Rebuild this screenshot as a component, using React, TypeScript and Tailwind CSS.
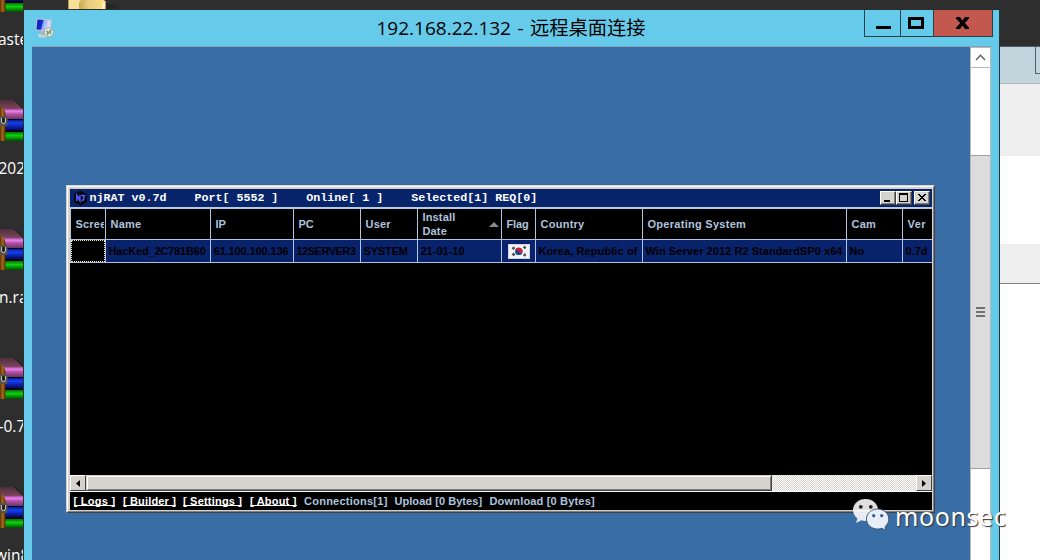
import React from "react";

const archives = [
  { name: "aste", shift: "-ml-[2px]" },
  { name: "202", shift: "-ml-[1.500px]" },
  { name: "n.ra", shift: "-ml-[1px]" },
  { name: "-0.7", shift: "-ml-[1.500px]" },
  { name: "win8", shift: "-ml-[5px]" },
];

const columns = [
  { head: "Scree", cell: "", w: "w-[35px]", ht: "tracking-[0.2px]", ct: "" },
  { head: "Name", cell: "HacKed_2C781B60", w: "w-[105px]", ht: "tracking-[0.2px]", ct: "tracking-[-0.17px]" },
  { head: "IP", cell: "61.100.100.136", w: "w-[83px]", ht: "", ct: "tracking-[-0.1px]" },
  { head: "PC", cell: "12SERVER3", w: "w-[67px]", ht: "", ct: "tracking-[-0.5px]" },
  { head: "User", cell: "SYSTEM", w: "w-[57px]", ht: "tracking-[0.2px]", ct: "tracking-[-0.15px]" },
  { head: "Install Date", cell: "21-01-10", w: "w-[84px]", ht: "tracking-[0.15px]", ct: "" },
  { head: "Flag", cell: "flag", w: "w-[34px]", ht: "tracking-[-0.1px]", ct: "" },
  { head: "Country", cell: "Korea, Republic of", w: "w-[107px]", ht: "tracking-[0.26px]", ct: "tracking-[0.1px]" },
  { head: "Operating System", cell: "Win Server 2012 R2 StandardSP0 x64", w: "w-[204px]", ht: "tracking-[0.28px]", ct: "tracking-[0.06px]" },
  { head: "Cam", cell: "No", w: "w-[56px]", ht: "tracking-[0.2px]", ct: "" },
  { head: "Ver", cell: "0.7d", w: "w-[30px]", ht: "tracking-[0.5px]", ct: "" },
];

const links = [
  { text: "[ Logs ]", w: "w-[49.5px]", t: "tracking-[0.28px]" },
  { text: "[ Builder ]", w: "w-[60px]", t: "tracking-[0.15px]" },
  { text: "[ Settings ]", w: "w-[67px]", t: "tracking-[0.2px]" },
  { text: "[ About ]", w: "w-[54px]", t: "tracking-[0.2px]" },
];

const stats = [
  { text: "Connections[1]", w: "w-[90.5px]", t: "tracking-[0.25px]" },
  { text: "Upload [0 Bytes]", w: "w-[95px]", t: "tracking-[0.05px]" },
  { text: "Download [0 Bytes]", w: "w-[110px]", t: "tracking-[0.18px]" },
];

function ArchiveIcon() {
  return (
    <svg width="24" height="42" viewBox="0 0 24 42" className="block shrink-0">
      <defs>
        <linearGradient id="lid" x1="0" y1="0" x2="0" y2="1">
          <stop offset="0" stopColor="#4c3038" />
          <stop offset="1" stopColor="#7d4560" />
        </linearGradient>
        <linearGradient id="pink" x1="0" y1="0" x2="0" y2="1">
          <stop offset="0" stopColor="#a04a98" />
          <stop offset="0.22" stopColor="#f080ee" />
          <stop offset="0.5" stopColor="#b052a6" />
          <stop offset="1" stopColor="#6c3460" />
        </linearGradient>
        <linearGradient id="blue" x1="0" y1="0" x2="0" y2="1">
          <stop offset="0" stopColor="#0a1c90" />
          <stop offset="0.3" stopColor="#1440f4" />
          <stop offset="1" stopColor="#06085c" />
        </linearGradient>
        <linearGradient id="green" x1="0" y1="0" x2="0" y2="1">
          <stop offset="0" stopColor="#067006" />
          <stop offset="0.4" stopColor="#0cd40c" />
          <stop offset="1" stopColor="#034803" />
        </linearGradient>
        <linearGradient id="strap" x1="0" y1="0" x2="1" y2="0">
          <stop offset="0" stopColor="#5a3405" />
          <stop offset="0.5" stopColor="#a8691a" />
          <stop offset="1" stopColor="#4a2a04" />
        </linearGradient>
      </defs>
      <path d="M0 0H14L23 9H0Z" fill="url(#lid)" />
      <path d="M14.500 0L23 8.500" stroke="#151515" strokeWidth="1" />
      <rect y="9" width="23" height="10" fill="url(#pink)" />
      <rect y="19" width="23" height="13" fill="#04041c" />
      <rect y="20" width="23" height="10" fill="url(#blue)" />
      <rect y="32" width="23" height="9" fill="url(#green)" />
      <path d="M0 7Q5 8 5.500 14V41H0Z" fill="url(#strap)" />
      <rect x="-1" y="16" width="8.500" height="10" rx="1.500" fill="#55524c" />
      <path d="M1.500 18V22Q3.500 25.500 5.500 22V18" fill="#221e1a" stroke="#b8b8b4" strokeWidth="1.100" />
    </svg>
  );
}

function FolderIcon() {
  return (
    <svg width="50" height="10" viewBox="0 0 50 10" className="block">
      <defs>
        <linearGradient id="fold" x1="0" y1="0" x2="1" y2="0">
          <stop offset="0" stopColor="#c9a950" />
          <stop offset="0.4" stopColor="#e8cd80" />
          <stop offset="1" stopColor="#f8dc80" />
        </linearGradient>
      </defs>
      <path d="M38 3L50 6L46 9H38Z" fill="#242424" />
      <path d="M0 0H36L38 2V9H0Z" fill="#f6e09a" />
      <path d="M13 0H35V9H11V3Z" fill="url(#fold)" />
      <path d="M35.500 3V9" stroke="#fff8e0" strokeWidth="2" />
      <path d="M0.500 0V9M37.500 1V9" stroke="#b89a50" strokeWidth="1" />
    </svg>
  );
}

function RemoteIcon() {
  return (
    <svg width="20" height="22" viewBox="0 0 20 22" className="block">
      <defs>
        <linearGradient id="screen" x1="0" y1="0" x2="1" y2="0.2">
          <stop offset="0" stopColor="#0818a8" />
          <stop offset="0.46" stopColor="#1430d8" />
          <stop offset="0.52" stopColor="#8ca4f4" />
          <stop offset="1" stopColor="#dce4ff" />
        </linearGradient>
      </defs>
      <ellipse cx="8" cy="17.500" rx="5" ry="2" fill="#cdd4d8" />
      <path d="M6 13H11V17H6Z" fill="#a8b4bc" />
      <path d="M1.500 0.500L17 1.500L15.800 14.500L0.300 12.500Z" fill="#b8c4cc" />
      <path d="M2.500 1.500L15.500 2.500L14.800 12.500L1.500 11.500Z" fill="url(#screen)" />
      <circle cx="13.800" cy="14.300" r="4.700" fill="#dfe3df" stroke="#9da5a5" strokeWidth="0.900" />
      <path d="M11.500 13L13.500 15L11.800 17M16.300 11.700L14.500 13.800L16.300 15.600" fill="none" stroke="#5c9a58" strokeWidth="1.300" />
    </svg>
  );
}

function KoreaFlag() {
  return (
    <svg width="22" height="15" viewBox="0 0 22 15" className="block">
      <rect x="0.500" y="0.500" width="21" height="14" fill="#f4f4f6" stroke="#d4d4dc" />
      <circle cx="10.800" cy="7.400" r="3.700" fill="#144a9c" />
      <path d="M7.300 6.200A3.700 3.700 0 0 1 14.300 8.600C13.400 9.400 11.700 9.200 10.800 7.700C9.900 6.200 8.300 5.600 7.300 6.200Z" fill="#d62030" />
      <path d="M4 4.800L6 2.700M5 5.700L7 3.600M15.200 2.900L17.200 4.900M16.300 2.200L18 4M4 9.800L6 11.900M5 9L7 11M15.300 11.600L17.300 9.500M16.400 12.300L18 10.600" stroke="#444" strokeWidth="1.200" />
    </svg>
  );
}

function CaptionButton({ children, className = "" }: { children: React.ReactNode; className?: string }) {
  return (
    <div className={"h-[14px] w-4 border border-t-white border-l-white border-r-[#404040] border-b-[#404040] bg-[#d6d3ce] " + className}>
      <svg width="14" height="12" viewBox="0 0 14 12" className="block" shapeRendering="crispEdges">
        <path d="M13.500 0V11.500H0" fill="none" stroke="#808080" />
        {children}
      </svg>
    </div>
  );
}

function RatWindow() {
  return (
    <div className="h-[328px] w-[869px] border border-t-[#d6d3ce] border-l-[#d6d3ce] border-r-[#404040] border-b-[#404040]">
      <div className="h-full border border-t-white border-l-white border-r-[#808080] border-b-[#808080] bg-[#d6d3ce] pt-[2px] pr-px pb-px pl-[2px]">
        <div className="flex h-full flex-col overflow-hidden bg-black font-['Liberation_Sans',sans-serif] text-[11px] font-bold">
          <div className="flex h-[18px] shrink-0 items-center bg-[#08246b] pl-[3px]">
            <svg width="15" height="16" viewBox="0 0 15 16" className="block shrink-0">
              <path d="M7.500 0.500L14 4V12L7.500 15.500L1 12V4Z" fill="#05060c" />
              <path d="M3.800 11V5.500L6.800 10.500V5M8 5.500H12.500M10.800 5.500V9Q10.500 10.500 8.500 10.300" fill="none" stroke="#4c58f4" strokeWidth="1.700" />
            </svg>
            <div className="ml-[1.500px] flex-1 whitespace-pre font-['Liberation_Mono',monospace] text-[11.670px] leading-[18px] text-white">
              {"njRAT v0.7d    Port[ 5552 ]    Online[ 1 ]    Selected[1] REQ[0]"}
            </div>
            <div className="mr-[2px] flex">
              <CaptionButton>
                <rect x="3" y="8" width="6" height="2" fill="#000" />
              </CaptionButton>
              <CaptionButton>
                <path d="M2 1H11V10H2ZM3 3V9H10V3Z" fill="#000" fillRule="evenodd" />
              </CaptionButton>
              <CaptionButton className="ml-[2px]">
                <path d="M3 2h2v1h1v1h2v-1h1v-1h2v1h-1v1h-1v1h-1v1h1v1h1v1h1v1h-2v-1h-1v-1h-2v1h-1v1h-2v-1h1v-1h1v-1h1v-1h-1v-1h-1v-1h-1z" fill="#000" />
              </CaptionButton>
            </div>
          </div>
          <div className="h-[2px] shrink-0 bg-[#b9c9e2]" />
          <div className="flex h-[31px] shrink-0 border-b border-l border-[#b0c4de] text-[#b0c4de]">
            {columns.map((c, i) => (
              <div
                key={c.head}
                className={
                  "flex shrink-0 items-center overflow-hidden pl-[4.500px] leading-[14px] " +
                  (i === columns.length - 1 ? "" : "border-r border-[#b0c4de] ") + c.w + " " + c.ht
                }
              >
                {c.head === "Install Date" ? (
                  <>
                    <span className="w-[66px] pr-[20px]">{c.head}</span>
                    <svg width="10" height="5" viewBox="0 0 10 5" className="block shrink-0">
                      <path d="M5 0L10 5H0Z" fill="#8a8a8a" />
                    </svg>
                  </>
                ) : i === 0 ? (
                  <span className="w-[28px] overflow-hidden whitespace-nowrap">{c.head}</span>
                ) : (
                  <span className="whitespace-nowrap">{c.head}</span>
                )}
              </div>
            ))}
          </div>
          <div className="flex h-[23px] shrink-0 border-b border-l border-[#b0c4de] bg-[#08226b] text-black">
            {columns.map((c, i) => (
              <div
                key={c.head}
                className={
                  "flex shrink-0 items-center overflow-hidden leading-[22px] whitespace-nowrap " +
                  (i === columns.length - 1 ? "" : "border-r border-[#b0c4de] ") +
                  (i === 0 ? "bg-black " : "pl-[2.500px] ") + c.w + " " + c.ct
                }
              >
                {i === 0 ? (
                  <div className="h-[22px] w-[34px] border border-dotted border-[#f0e4b0]" />
                ) : c.cell === "flag" ? (
                  <div className="pl-[3.500px]">
                    <KoreaFlag />
                  </div>
                ) : (
                  c.cell
                )}
              </div>
            ))}
          </div>
          <div className="flex-1" />
          <div className="flex h-[16px] shrink-0 bg-[repeating-conic-gradient(#fff_0_25%,#d6d3ce_0_50%)] bg-[length:2px_2px]">
            <div className="flex w-4 items-center justify-center border border-t-white border-l-white border-r-[#404040] border-b-[#404040] bg-[#d6d3ce]">
              <svg width="4" height="7" viewBox="0 0 4 7"><path d="M4 0V7L0 3.500Z" fill="#000" /></svg>
            </div>
            <div className="w-[686px] border border-t-[#d6d3ce] border-l-[#d6d3ce] border-r-[#404040] border-b-[#404040]">
              <div className="h-full border border-t-white border-l-white border-r-[#808080] border-b-[#808080] bg-[#d6d3ce]" />
            </div>
            <div className="flex-1" />
            <div className="flex w-4 items-center justify-center border border-t-white border-l-white border-r-[#404040] border-b-[#404040] bg-[#d6d3ce]">
              <svg width="4" height="7" viewBox="0 0 4 7"><path d="M0 0V7L4 3.500Z" fill="#000" /></svg>
            </div>
          </div>
          <div className="h-px shrink-0 bg-white" />
          <div className="flex h-[18px] shrink-0 pl-[3.500px] leading-[18px] whitespace-nowrap">
            {links.map((l) => (
              <div key={l.text} className={"shrink-0 " + l.w}>
                <span className={"inline-block h-[14px] border-b border-white text-white " + l.t}>{l.text}</span>
              </div>
            ))}
            {stats.map((s) => (
              <div key={s.text} className={"shrink-0 text-[#b0c4de] " + s.w + " " + s.t}>{s.text}</div>
            ))}
          </div>
        </div>
      </div>
    </div>
  );
}

function Watermark() {
  return (
    <div className="absolute top-[498px] left-[852px] flex">
      <svg width="38" height="34" viewBox="0 0 38 34" className="block">
        <path d="M13.500 1C6.500 1 1 5.800 1 12C1 15.500 2.800 18.500 5.500 20.500L4 25L9.300 22.300Q11.400 23 13.500 23C20.500 23 26 18.200 26 12C26 5.800 20.500 1 13.500 1Z" fill="#fff" fillOpacity="0.880" />
        <circle cx="8.800" cy="8.800" r="1.900" fill="#222" />
        <circle cx="18.800" cy="8.800" r="1.900" fill="#222" />
        <path d="M25.500 11C19.500 11 14.500 15.300 14.500 21C14.500 26.700 19.500 31 25.500 31Q28 31 30 30.200L34 32.500L33 28.600C35.300 26.800 36.800 24 36.800 21C36.800 15.300 31.500 11 25.500 11Z" fill="#e6eef8" stroke="#39506c" strokeWidth="0.900" />
        <circle cx="21.700" cy="17.700" r="1.600" fill="#2c5d96" />
        <circle cx="29.700" cy="17.700" r="1.600" fill="#2c5d96" />
      </svg>
      <span className="ml-[5px] font-['Noto_Sans',sans-serif] text-[25px] leading-[36px] tracking-[0.6px] text-white [text-shadow:1px_1px_1px_#333]">moonsec</span>
    </div>
  );
}

export default function App() {
  return (
    <div className="relative flex h-[560px] w-[1040px] overflow-hidden bg-[#2e2e2e]">
      <div className="h-[560px] w-6 shrink-0 overflow-hidden">
        <div className="-mt-[29px] flex flex-col">
          {archives.map((a) => (
            <div key={a.name} className="h-[129px] w-[23px] shrink-0 overflow-hidden">
              <ArchiveIcon />
              <div className={"pt-[14px] font-['Open_Sans',sans-serif] text-[15.500px] leading-[24px] whitespace-nowrap text-white " + a.shift}>{a.name}</div>
            </div>
          ))}
        </div>
      </div>

      <div className="flex w-[976px] shrink-0 flex-col">
        <div className="h-[10px] shrink-0 pl-[44px]">
          <FolderIcon />
        </div>
        <div className="flex flex-1 flex-col border-r border-[#24343c] bg-[#66caea]">
          <div className="flex h-[36px] shrink-0 pl-[11px]">
            <div className="pt-[8px]">
              <RemoteIcon />
            </div>
            <div className="w-[809px] pl-[321.500px] font-['Open_Sans','Noto_Sans_CJK_SC',sans-serif] text-[19px] leading-[36px] [word-spacing:1.500px] whitespace-nowrap text-black">
              192.168.22.132 - <span className="text-[19.300px]">远程桌面连接</span>
            </div>
            <div className="flex h-[27px] w-[129px] border border-t-0 border-[#2c4048]">
              <div className="w-[36px] border-r border-[#2c4048]">
                <svg width="35" height="26" viewBox="0 0 35 26"><rect x="11" y="16" width="15" height="3" fill="#000" /></svg>
              </div>
              <div className="w-[33px] border-r border-[#2c4048]">
                <svg width="32" height="26" viewBox="0 0 32 26"><rect x="8.500" y="8.500" width="13" height="9" fill="none" stroke="#000" strokeWidth="3" /></svg>
              </div>
              <div className="flex-1 bg-[#c3584e]">
                <svg width="58" height="26" viewBox="0 0 58 26">
                  <path d="M22 7H26L28.500 10.500L31 7H35V8.500L30.800 13L35 17.500V19H31L28.500 15.500L26 19H22V17.500L26.200 13L22 8.500Z" fill="#000" />
                </svg>
              </div>
            </div>
          </div>
          <div className="ml-2 h-px w-[959px] shrink-0 bg-[#80a2b4]" />
          <div className="flex flex-1 pl-2">
            <div className="w-[938px] shrink-0 bg-[#396da5] pt-[138px] pl-[34px]">
              <RatWindow />
            </div>
            <div className="flex w-[21px] shrink-0 flex-col border-x border-[#b8b8b8] bg-white">
              <div className="flex h-[21px] shrink-0 items-center justify-center border-y border-[#b8b8b8]">
                <svg width="11" height="7" viewBox="0 0 11 7"><path d="M1 6L5.500 1.200L10 6" fill="none" stroke="#606060" strokeWidth="1.400" /></svg>
              </div>
              <div className="mt-[87px] flex h-[314px] shrink-0 items-center justify-center border-y border-[#a0a0a0] bg-[#dcdcdc]">
                <svg width="9" height="10" viewBox="0 0 9 10" shapeRendering="crispEdges">
                  <path d="M0 1H9M0 5H9M0 9H9" stroke="#707070" strokeWidth="2" />
                </svg>
              </div>
            </div>
          </div>
        </div>
      </div>

      <div className="flex w-10 shrink-0 flex-col bg-white">
        <div className="h-[46px] shrink-0 bg-[#2e2e2e]" />
        <div className="flex h-[38px] shrink-0 justify-end border-t border-b border-t-[#50606a] border-b-[#a8b4ba] bg-[#c3d5dc]">
          <div className="h-[27px] w-[5px] border-b border-l border-[#50606a]" />
        </div>
        <div className="h-[72px] shrink-0 bg-[#efefef]" />
        <div className="h-[88px] shrink-0 bg-white" />
        <div className="h-[40px] shrink-0 border-b border-[#808088] bg-[#efefef]" />
      </div>

      <Watermark />
    </div>
  );
}
